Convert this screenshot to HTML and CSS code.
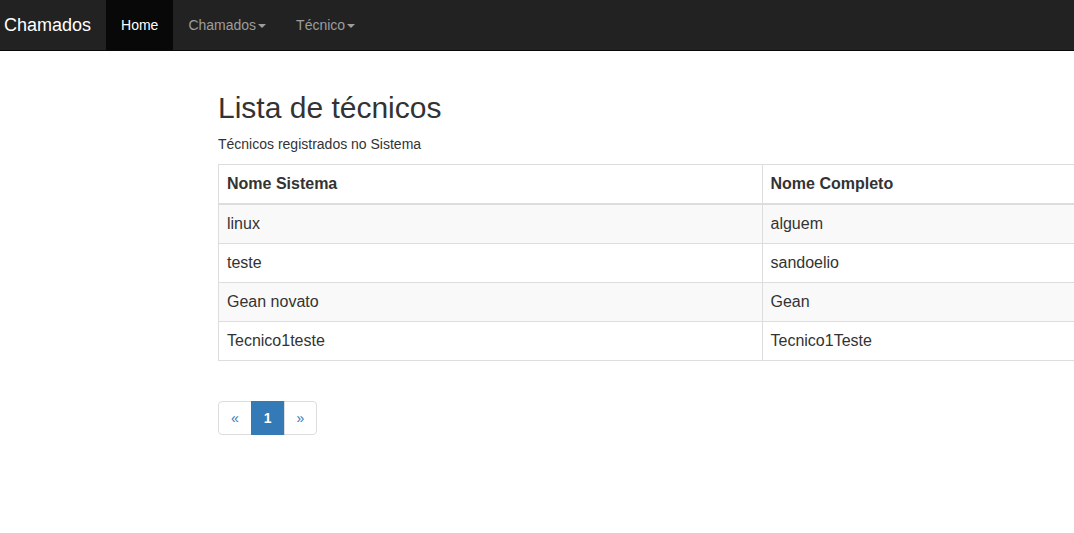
FILE: index.html
```html
<!DOCTYPE html>
<html lang="pt-BR">
<head>
<meta charset="utf-8">
<title>Chamados</title>
<link rel="stylesheet" href="styles.css">
</head>
<body>
<nav class="navbar">
  <a class="brand" href="#">Chamados</a>
  <ul class="nav">
    <li class="active"><a href="#">Home</a></li>
    <li><a href="#">Chamados<span class="caret"></span></a></li>
    <li><a href="#">Técnico<span class="caret"></span></a></li>
  </ul>
</nav>
<main class="content">
  <h2 class="title">Lista de técnicos</h2>
  <p class="subtitle">Técnicos registrados no Sistema</p>
  <table class="table">
    <thead>
      <tr><th>Nome Sistema</th><th>Nome Completo</th></tr>
    </thead>
    <tbody>
      <tr><td>linux</td><td>alguem</td></tr>
      <tr><td>teste</td><td>sandoelio</td></tr>
      <tr><td>Gean novato</td><td>Gean</td></tr>
      <tr><td>Tecnico1teste</td><td>Tecnico1Teste</td></tr>
    </tbody>
  </table>
  <ul class="pagination">
    <li><a href="#">«</a></li>
    <li class="active"><a href="#">1</a></li>
    <li><a href="#">»</a></li>
  </ul>
</main>
</body>
</html>
```
FILE: styles.css
```css
* { box-sizing: border-box; }
html, body {
  margin: 0;
  padding: 0;
  overflow: hidden;
}
body {
  font-family: "Liberation Sans", Arial, sans-serif;
  font-size: 14px;
  line-height: 1.42857;
  color: #333;
  background: #fff;
  width: 1074px;
  height: 533px;
}
a { text-decoration: none; }

.navbar {
  display: flex;
  align-items: stretch;
  height: 51px;
  background: #222;
  border-bottom: 1px solid #080808;
}
.brand {
  display: block;
  padding: 15px 15px 15px 4px;
  font-size: 18px;
  line-height: 20px;
  color: #fff;
}
.nav {
  display: flex;
  list-style: none;
  margin: 0;
  padding: 0;
}
.nav li a {
  display: block;
  height: 50px;
  padding: 15px 15px;
  line-height: 20px;
  font-size: 14px;
  color: #9d9d9d;
}
.nav li.active a {
  background: #080808;
  color: #fff;
}
.caret {
  display: inline-block;
  width: 0;
  height: 0;
  margin-left: 2px;
  vertical-align: middle;
  border-top: 4px solid #9d9d9d;
  border-left: 4px solid transparent;
  border-right: 4px solid transparent;
}

.content {
  padding: 0 0 0 218px;
  width: 1074px;
  overflow: hidden;
}
.title {
  margin: 40px 0 10px;
  font-size: 30px;
  font-weight: 500;
  line-height: 33px;
  color: #333;
}
.subtitle {
  margin: 0 0 10px;
  font-size: 14px;
  line-height: 20px;
}
.table {
  width: 1088px;
  max-width: none;
  border-collapse: collapse;
  border: 1px solid #ddd;
  margin-bottom: 20px;
  font-size: 16px;
}
.table th, .table td {
  width: 50%;
  padding: 8px 8px;
  line-height: 22px;
  text-align: left;
  border: 1px solid #ddd;
}
.table th {
  font-weight: bold;
  border-bottom: 2px solid #ddd;
}
.table tbody tr:nth-child(odd) td { background: #f9f9f9; }

.pagination {
  display: inline-flex;
  list-style: none;
  margin: 20px 0;
  padding: 0;
}
.pagination li a {
  display: block;
  padding: 6px 12px;
  line-height: 20px;
  font-size: 14px;
  color: #337ab7;
  background: #fff;
  border: 1px solid #ddd;
  margin-left: -1px;
}
.pagination li:first-child a {
  margin-left: 0;
  border-radius: 4px 0 0 4px;
}
.pagination li:last-child a { border-radius: 0 4px 4px 0; }
.pagination li.active a {
  background: #337ab7;
  border-color: #337ab7;
  color: #fff;
  font-weight: bold;
}
```
